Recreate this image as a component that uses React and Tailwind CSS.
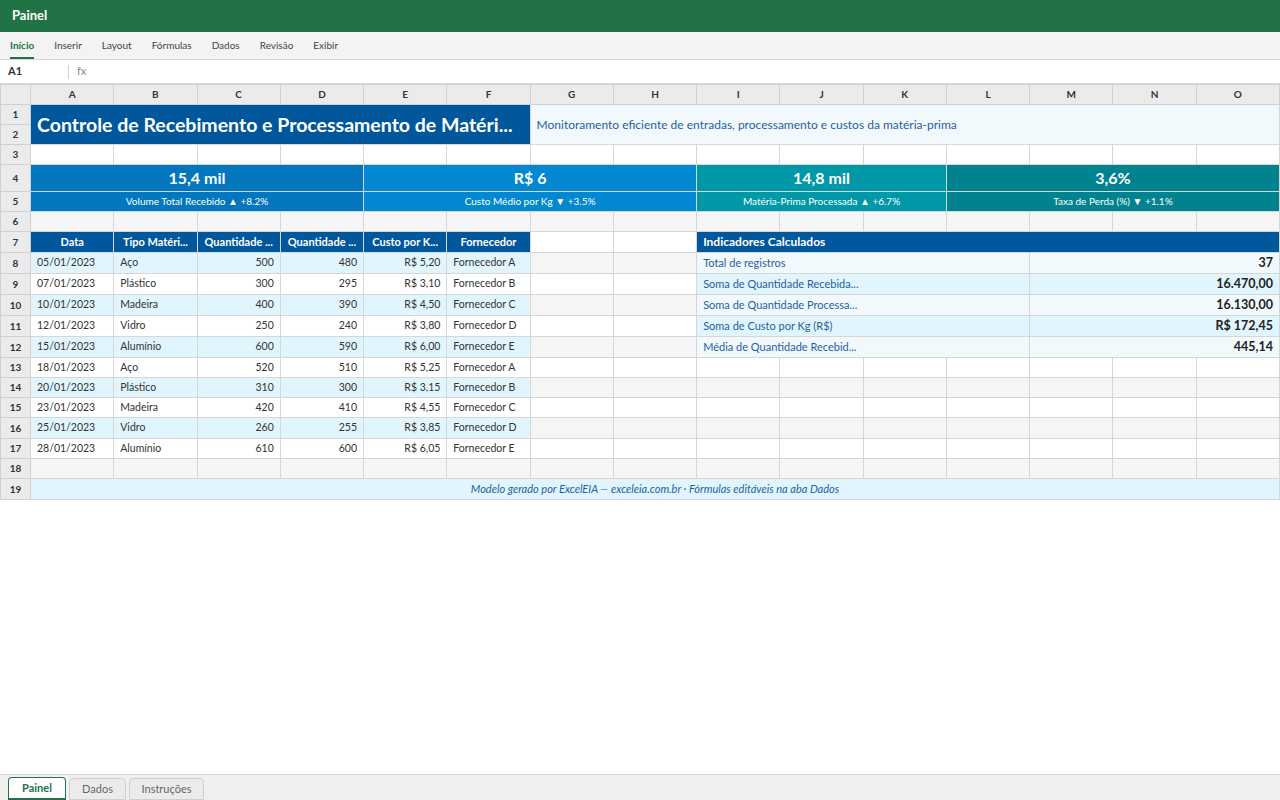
import React from "react"

const cols = ["A", "B", "C", "D", "E", "F", "G", "H", "I", "J", "K", "L", "M", "N", "O"]

const rows = [
  ["05/01/2023", "Aço", "500", "480", "R$ 5,20", "Fornecedor A"],
  ["07/01/2023", "Plástico", "300", "295", "R$ 3,10", "Fornecedor B"],
  ["10/01/2023", "Madeira", "400", "390", "R$ 4,50", "Fornecedor C"],
  ["12/01/2023", "Vidro", "250", "240", "R$ 3,80", "Fornecedor D"],
  ["15/01/2023", "Alumínio", "600", "590", "R$ 6,00", "Fornecedor E"],
  ["18/01/2023", "Aço", "520", "510", "R$ 5,25", "Fornecedor A"],
  ["20/01/2023", "Plástico", "310", "300", "R$ 3,15", "Fornecedor B"],
  ["23/01/2023", "Madeira", "420", "410", "R$ 4,55", "Fornecedor C"],
  ["25/01/2023", "Vidro", "260", "255", "R$ 3,85", "Fornecedor D"],
  ["28/01/2023", "Alumínio", "610", "600", "R$ 6,05", "Fornecedor E"],
]

const indicators = [
  ["Total de registros", "37"],
  ["Soma de Quantidade Recebida...", "16.470,00"],
  ["Soma de Quantidade Processa...", "16.130,00"],
  ["Soma de Custo por Kg (R$)", "R$ 172,45"],
  ["Média de Quantidade Recebid...", "445,14"],
]

const headers = ["Data", "Tipo Matéri...", "Quantidade ...", "Quantidade ...", "Custo por K...", "Fornecedor"]

const kpis = [
  { value: "15,4 mil", label: "Volume Total Recebido ▲ +8.2%", span: 4, bg: "bg-[#0277bd]" },
  { value: "R$ 6", label: "Custo Médio por Kg ▼ +3.5%", span: 4, bg: "bg-[#0288d1]" },
  { value: "14,8 mil", label: "Matéria-Prima Processada ▲ +6.7%", span: 3, bg: "bg-[#0097a7]" },
  { value: "3,6%", label: "Taxa de Perda (%) ▼ +1.1%", span: 4, bg: "bg-[#00838f]" },
]

const cell = "border border-[#d6d6d6] px-1.5 whitespace-nowrap overflow-hidden text-ellipsis"
const rowHead = "border border-[#d0d0d0] bg-[#ebebeb] text-center text-[10px] font-bold text-[#333]"

const Empty = ({ n, row }) => {
  const bg = row % 2 == 0 ? "bg-[#f5f5f5]" : "bg-white"
  return Array.from({ length: n }).map((_, i) => <td key={i} className={`${cell} ${bg}`}></td>)
}

const App = () => {
  const tabs = ["Início", "Inserir", "Layout", "Fórmulas", "Dados", "Revisão", "Exibir"]

  return <div className="h-screen flex flex-col bg-white font-[Lato,sans-serif] text-[#333] overflow-hidden">
    <div className="h-8 shrink-0 bg-[#217346] flex items-center px-3">
      <span className="text-white text-[13px] font-bold">Painel</span>
    </div>

    <div className="h-7 shrink-0 bg-[#f3f3f3] border-b border-[#d8d8d8] flex items-end gap-5 px-2.5 text-[10px]">
      {tabs.map((t, i) => (
        <div key={t} className={`h-full flex items-center pt-0.5 border-b-2 ${i == 0 ? 'border-[#217346] text-[#217346] font-bold' : 'border-transparent text-[#444]'}`}>
          {t}
        </div>
      ))}
    </div>

    <div className="h-6 shrink-0 border-b border-[#d8d8d8] flex items-center text-[11px]">
      <div className="w-[68px] pl-2 font-bold text-[#333]">A1</div>
      <div className="h-3.5 border-l border-[#cfcfcf]"></div>
      <div className="pl-2 text-[#888]">fx</div>
    </div>

    <div className="flex-1 overflow-hidden">
      <table className="w-full table-fixed border-collapse text-[10.5px]">
        <colgroup>
          <col className="w-[30px]" />
          {cols.map(c => <col key={c} />)}
        </colgroup>
        <thead>
          <tr className="h-5">
            <th className="border border-[#d0d0d0] bg-[#ebebeb]"></th>
            {cols.map(c => <th key={c} className="border border-[#d0d0d0] bg-[#ebebeb] text-[10px] font-bold text-[#333]">{c}</th>)}
          </tr>
        </thead>
        <tbody>
          <tr className="h-5">
            <td className={rowHead}>1</td>
            <td colSpan={6} rowSpan={2} className={`${cell} bg-[#01579b] text-white text-[19.5px] font-bold`}>
              Controle de Recebimento e Processamento de Matéri...
            </td>
            <td colSpan={9} rowSpan={2} className={`${cell} bg-[#f1f9fd] text-[#1f5fa3] text-[12px]`}>
              Monitoramento eficiente de entradas, processamento e custos da matéria-prima
            </td>
          </tr>
          <tr className="h-5">
            <td className={rowHead}>2</td>
          </tr>

          <tr className="h-5">
            <td className={rowHead}>3</td>
            <Empty n={15} row={3} />
          </tr>

          <tr className="h-[27px]">
            <td className={rowHead}>4</td>
            {kpis.map(k => (
              <td key={k.value} colSpan={k.span} className={`${cell} ${k.bg} text-white text-center text-[16px] font-bold`}>{k.value}</td>
            ))}
          </tr>
          <tr className="h-5">
            <td className={rowHead}>5</td>
            {kpis.map(k => (
              <td key={k.label} colSpan={k.span} className={`${cell} ${k.bg} text-white text-center text-[10px]`}>{k.label}</td>
            ))}
          </tr>

          <tr className="h-5">
            <td className={rowHead}>6</td>
            <Empty n={15} row={6} />
          </tr>

          <tr className="h-[21px]">
            <td className={rowHead}>7</td>
            {headers.map((h, i) => (
              <td key={i} className={`${cell} bg-[#01579b] text-white text-center text-[11px] font-bold`}>{h}</td>
            ))}
            <Empty n={2} row={7} />
            <td colSpan={7} className={`${cell} bg-[#01579b] text-white text-[12px] font-bold`}>Indicadores Calculados</td>
          </tr>

          {rows.map((r, i) => {
            const n = i + 8
            const bg = n % 2 == 0 ? "bg-[#e1f5fe]" : "bg-white"
            const ind = indicators[i]
            return <tr key={n} className={ind || n == 16 ? "h-[21px]" : "h-5"}>
              <td className={rowHead}>{n}</td>
              <td className={`${cell} ${bg}`}>{r[0]}</td>
              <td className={`${cell} ${bg}`}>{r[1]}</td>
              <td className={`${cell} ${bg} text-right`}>{r[2]}</td>
              <td className={`${cell} ${bg} text-right`}>{r[3]}</td>
              <td className={`${cell} ${bg} text-right`}>{r[4]}</td>
              <td className={`${cell} ${bg}`}>{r[5]}</td>
              {ind
                ? <>
                  <Empty n={2} row={n} />
                  <td colSpan={4} className={`${cell} ${n % 2 == 0 ? 'bg-[#f1f9fd]' : 'bg-[#e1f5fe]'} text-[#1f5fa3] text-[11px]`}>{ind[0]}</td>
                  <td colSpan={3} className={`${cell} ${n % 2 == 0 ? 'bg-[#f1f9fd]' : 'bg-[#e1f5fe]'} text-right text-[12.5px] font-bold text-[#222]`}>{ind[1]}</td>
                </>
                : <Empty n={9} row={n} />}
            </tr>
          })}

          <tr className="h-5">
            <td className={rowHead}>18</td>
            <Empty n={15} row={18} />
          </tr>
          <tr className="h-[21px]">
            <td className={rowHead}>19</td>
            <td colSpan={15} className={`${cell} bg-[#e1f5fe] text-center italic text-[11px] text-[#1f5fa3]`}>
              Modelo gerado por ExcelEIA — exceleia.com.br · Fórmulas editáveis na aba Dados
            </td>
          </tr>
        </tbody>
      </table>
    </div>

    <div className="h-[26px] shrink-0 bg-[#f0f0f0] border-t border-[#d6d6d6] flex items-end gap-[3px] px-2 text-[11px]">
      <div className="h-[23px] w-[58px] flex items-center justify-center bg-white border border-[#217346] border-b-2 rounded-t-sm text-[#217346] font-bold">Painel</div>
      <div className="h-[22px] w-[57px] flex items-center justify-center bg-[#ebebeb] border border-[#d0d0d0] rounded-t-sm text-[#666]">Dados</div>
      <div className="h-[22px] w-[75px] flex items-center justify-center bg-[#ebebeb] border border-[#d0d0d0] rounded-t-sm text-[#666]">Instruções</div>
    </div>
  </div>
}

export default App
